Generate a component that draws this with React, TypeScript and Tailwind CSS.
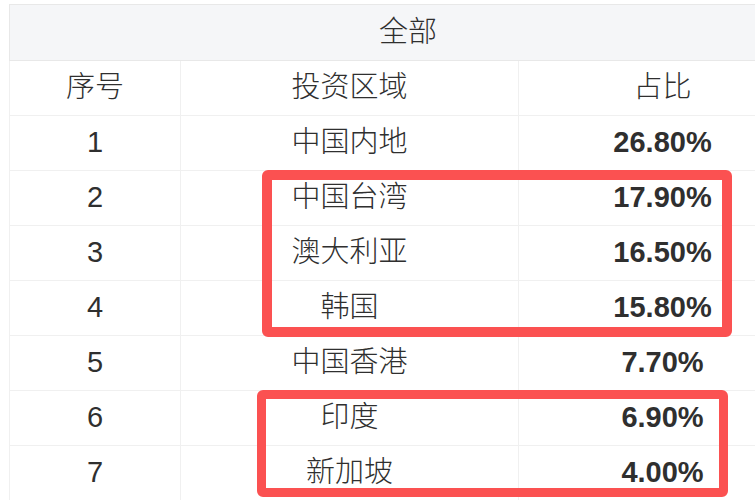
const rows = [
  { no: 1, region: "中国内地", pct: "26.80%" },
  { no: 2, region: "中国台湾", pct: "17.90%" },
  { no: 3, region: "澳大利亚", pct: "16.50%" },
  { no: 4, region: "韩国", pct: "15.80%" },
  { no: 5, region: "中国香港", pct: "7.70%" },
  { no: 6, region: "印度", pct: "6.90%" },
  { no: 7, region: "新加坡", pct: "4.00%" },
];

export default function App() {
  return (
    <div
      className="relative h-[500px] w-[755px] overflow-hidden bg-white text-[29px] text-[#2f2f2f]"
      style={{ fontFamily: '"Liberation Sans", "Noto Sans CJK SC", sans-serif' }}
    >
      <table className="ml-[9px] mt-[4px] w-[797px] table-fixed border-collapse border border-[#e8e8e8]">
        <colgroup>
          <col className="w-[171px]" />
          <col className="w-[338px]" />
          <col className="w-[288px]" />
        </colgroup>
        <thead>
          <tr className="h-[56px] bg-[#f5f6f8]">
            <th colSpan={3} className="border border-[#e8e8e8] text-center font-light">
              全部
            </th>
          </tr>
          <tr className="h-[55px]">
            <th className="border border-[#f0f0f0] font-light">序号</th>
            <th className="border border-[#f0f0f0] font-light">投资区域</th>
            <th className="border border-[#f0f0f0] font-light">占比</th>
          </tr>
        </thead>
        <tbody>
          {rows.map((r) => (
            <tr key={r.no} className="h-[55px]">
              <td className="border border-[#f0f0f0] text-center">{r.no}</td>
              <td className="border border-[#f0f0f0] text-center font-light">{r.region}</td>
              <td className="border border-[#f0f0f0] text-center font-bold">{r.pct}</td>
            </tr>
          ))}
        </tbody>
      </table>

      {/* annotation boxes */}
      <div className="absolute left-[262px] top-[170px] h-[167px] w-[470px] rounded-[6px] border-[10px] border-[#fb5151]" />
      <div className="absolute left-[257px] top-[390px] h-[107px] w-[471px] rounded-[6px] border-[9px] border-[#fb5151]" />
    </div>
  );
}
